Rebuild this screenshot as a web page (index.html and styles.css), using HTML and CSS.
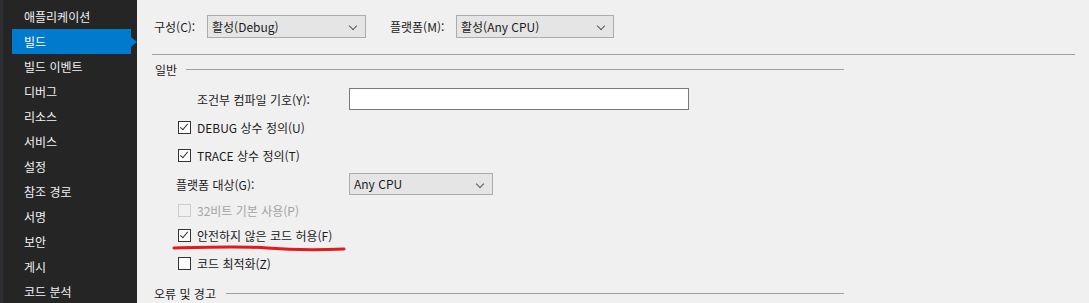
FILE: index.html
```html
<!DOCTYPE html>
<html lang="ko">
<head>
    <meta charset="UTF-8">
    <title>빌드</title>
    <link rel="stylesheet" href="styles.css">
</head>
<body>
    <div class="page">
        <div class="sidebar">
            <div class="nav-item">애플리케이션</div>
            <div class="nav-item active">빌드</div>
            <div class="nav-item">빌드 이벤트</div>
            <div class="nav-item">디버그</div>
            <div class="nav-item">리소스</div>
            <div class="nav-item">서비스</div>
            <div class="nav-item">설정</div>
            <div class="nav-item">참조 경로</div>
            <div class="nav-item">서명</div>
            <div class="nav-item">보안</div>
            <div class="nav-item">게시</div>
            <div class="nav-item">코드 분석</div>
        </div>

        <div class="main">
            <div class="top-row">
                <span class="label config-label">구성(C):</span>
                <div class="combo combo-config">활성(Debug)<span class="chev"></span></div>
                <span class="label label-platform">플랫폼(M):</span>
                <div class="combo combo-platform">활성(Any CPU)<span class="chev"></span></div>
            </div>
            <div class="rule"></div>

            <div class="section-head"><span>일반</span><div class="section-line"></div></div>

            <div class="row row-input">
                <span class="label symbols-label">조건부 컴파일 기호(Y):</span>
                <div class="textbox"></div>
            </div>
            <div class="row check-row">
                <span class="check checked"></span><span>DEBUG 상수 정의(U)</span>
            </div>
            <div class="row check-row">
                <span class="check checked"></span><span>TRACE 상수 정의(T)</span>
            </div>
            <div class="row row-target">
                <span class="label target-label">플랫폼 대상(G):</span>
                <div class="combo combo-target">Any CPU<span class="chev"></span></div>
            </div>
            <div class="row check-row row-short disabled">
                <span class="check"></span><span>32비트 기본 사용(P)</span>
            </div>
            <div class="row check-row marked">
                <span class="check checked"></span><span>안전하지 않은 코드 허용(F)</span>
                <svg class="mark" width="180" height="8" viewBox="0 0 180 8">
                    <path d="M2 3 C 40 2, 70 1, 95 3 S 150 5, 172 4" fill="none" stroke="#e3191c" stroke-width="3" stroke-linecap="round"/>
                </svg>
            </div>
            <div class="row check-row">
                <span class="check"></span><span>코드 최적화(Z)</span>
            </div>

            <div class="section-head section-errors"><span>오류 및 경고</span><div class="section-line"></div></div>
        </div>
    </div>
</body>
</html>
```

FILE: styles.css
```css
body {
    margin: 0;
    font-family: "Noto Sans CJK KR", "Noto Sans", sans-serif;
    font-size: 12px;
    color: #1b1b1b;
    background-color: #f0f0f0;
    overflow: hidden;
}
.page {
    display: flex;
    height: 303px;
}
.sidebar {
    width: 134px;
    flex-shrink: 0;
    background-color: #252526;
    border-left: 3px solid #2f2f33;
    padding-top: 4px;
    box-sizing: content-box;
}
.nav-item {
    position: relative;
    height: 25px;
    line-height: 25px;
    margin-left: 9px;
    width: 107px;
    padding-left: 12px;
    color: #f1f1f1;
    white-space: nowrap;
}
.nav-item.active {
    background-color: #007acc;
    color: #fff;
}
.nav-item.active::after {
    content: "";
    position: absolute;
    right: -6px;
    top: 8px;
    border-top: 5px solid transparent;
    border-bottom: 5px solid transparent;
    border-left: 6px solid #007acc;
}
.main {
    flex: 1;
    padding: 15px 0 0 15px;
}
.top-row {
    display: flex;
    align-items: center;
    height: 23px;
}
.label {
    padding-left: 2px;
    white-space: nowrap;
    box-sizing: border-box;
}
.config-label {
    width: 55px;
}
.combo {
    position: relative;
    box-sizing: border-box;
    height: 23px;
    line-height: 21px;
    padding-left: 4px;
    background-color: #e5e5e5;
    border: 1px solid #acacac;
    white-space: nowrap;
}
.combo-config {
    width: 159px;
}
.label-platform {
    width: 68px;
    margin-left: 22px;
}
.combo-platform {
    width: 158px;
}
.chev {
    position: absolute;
    right: 9px;
    top: 7px;
    width: 5px;
    height: 5px;
    border-right: 1px solid #5a5a5a;
    border-bottom: 1px solid #5a5a5a;
    transform: rotate(45deg);
}
.rule {
    margin-top: 16px;
    width: 923px;
    height: 1px;
    background-color: #a0a0a0;
}
.section-head {
    display: flex;
    align-items: center;
    width: 692px;
    height: 28px;
    padding-left: 3px;
    box-sizing: border-box;
}
.section-line {
    flex: 1;
    height: 1px;
    margin-left: 9px;
    background-color: #a0a0a0;
}
.section-errors {
    height: 32px;
    padding-left: 2px;
}
.section-errors .section-line {
    margin-left: 10px;
}
.row {
    position: relative;
    display: flex;
    align-items: center;
    height: 28px;
}
.row-input {
    margin-top: 2px;
}
.symbols-label {
    width: 197px;
    padding-left: 45px;
}
.textbox {
    box-sizing: border-box;
    width: 340px;
    height: 22px;
    background-color: #fff;
    border: 1px solid #7a7a7a;
}
.check-row {
    padding-left: 26px;
}
.check {
    box-sizing: border-box;
    position: relative;
    width: 13px;
    height: 13px;
    margin-right: 6px;
    background-color: #fff;
    border: 1px solid #333;
}
.check.checked::after {
    content: "";
    position: absolute;
    left: 3px;
    top: 0px;
    width: 3px;
    height: 7px;
    border-right: 1px solid #333;
    border-bottom: 1px solid #333;
    transform: rotate(40deg);
}
.row-target {
    height: 30px;
}
.target-label {
    width: 197px;
    padding-left: 24px;
}
.combo-target {
    width: 144px;
    height: 22px;
    line-height: 20px;
}
.row-short {
    height: 22px;
}
.disabled {
    color: #a3a3a3;
}
.disabled .check {
    border-color: #cccccc;
    background-color: #f0f0f0;
}
.mark {
    position: absolute;
    left: 20px;
    top: 24px;
}
```
